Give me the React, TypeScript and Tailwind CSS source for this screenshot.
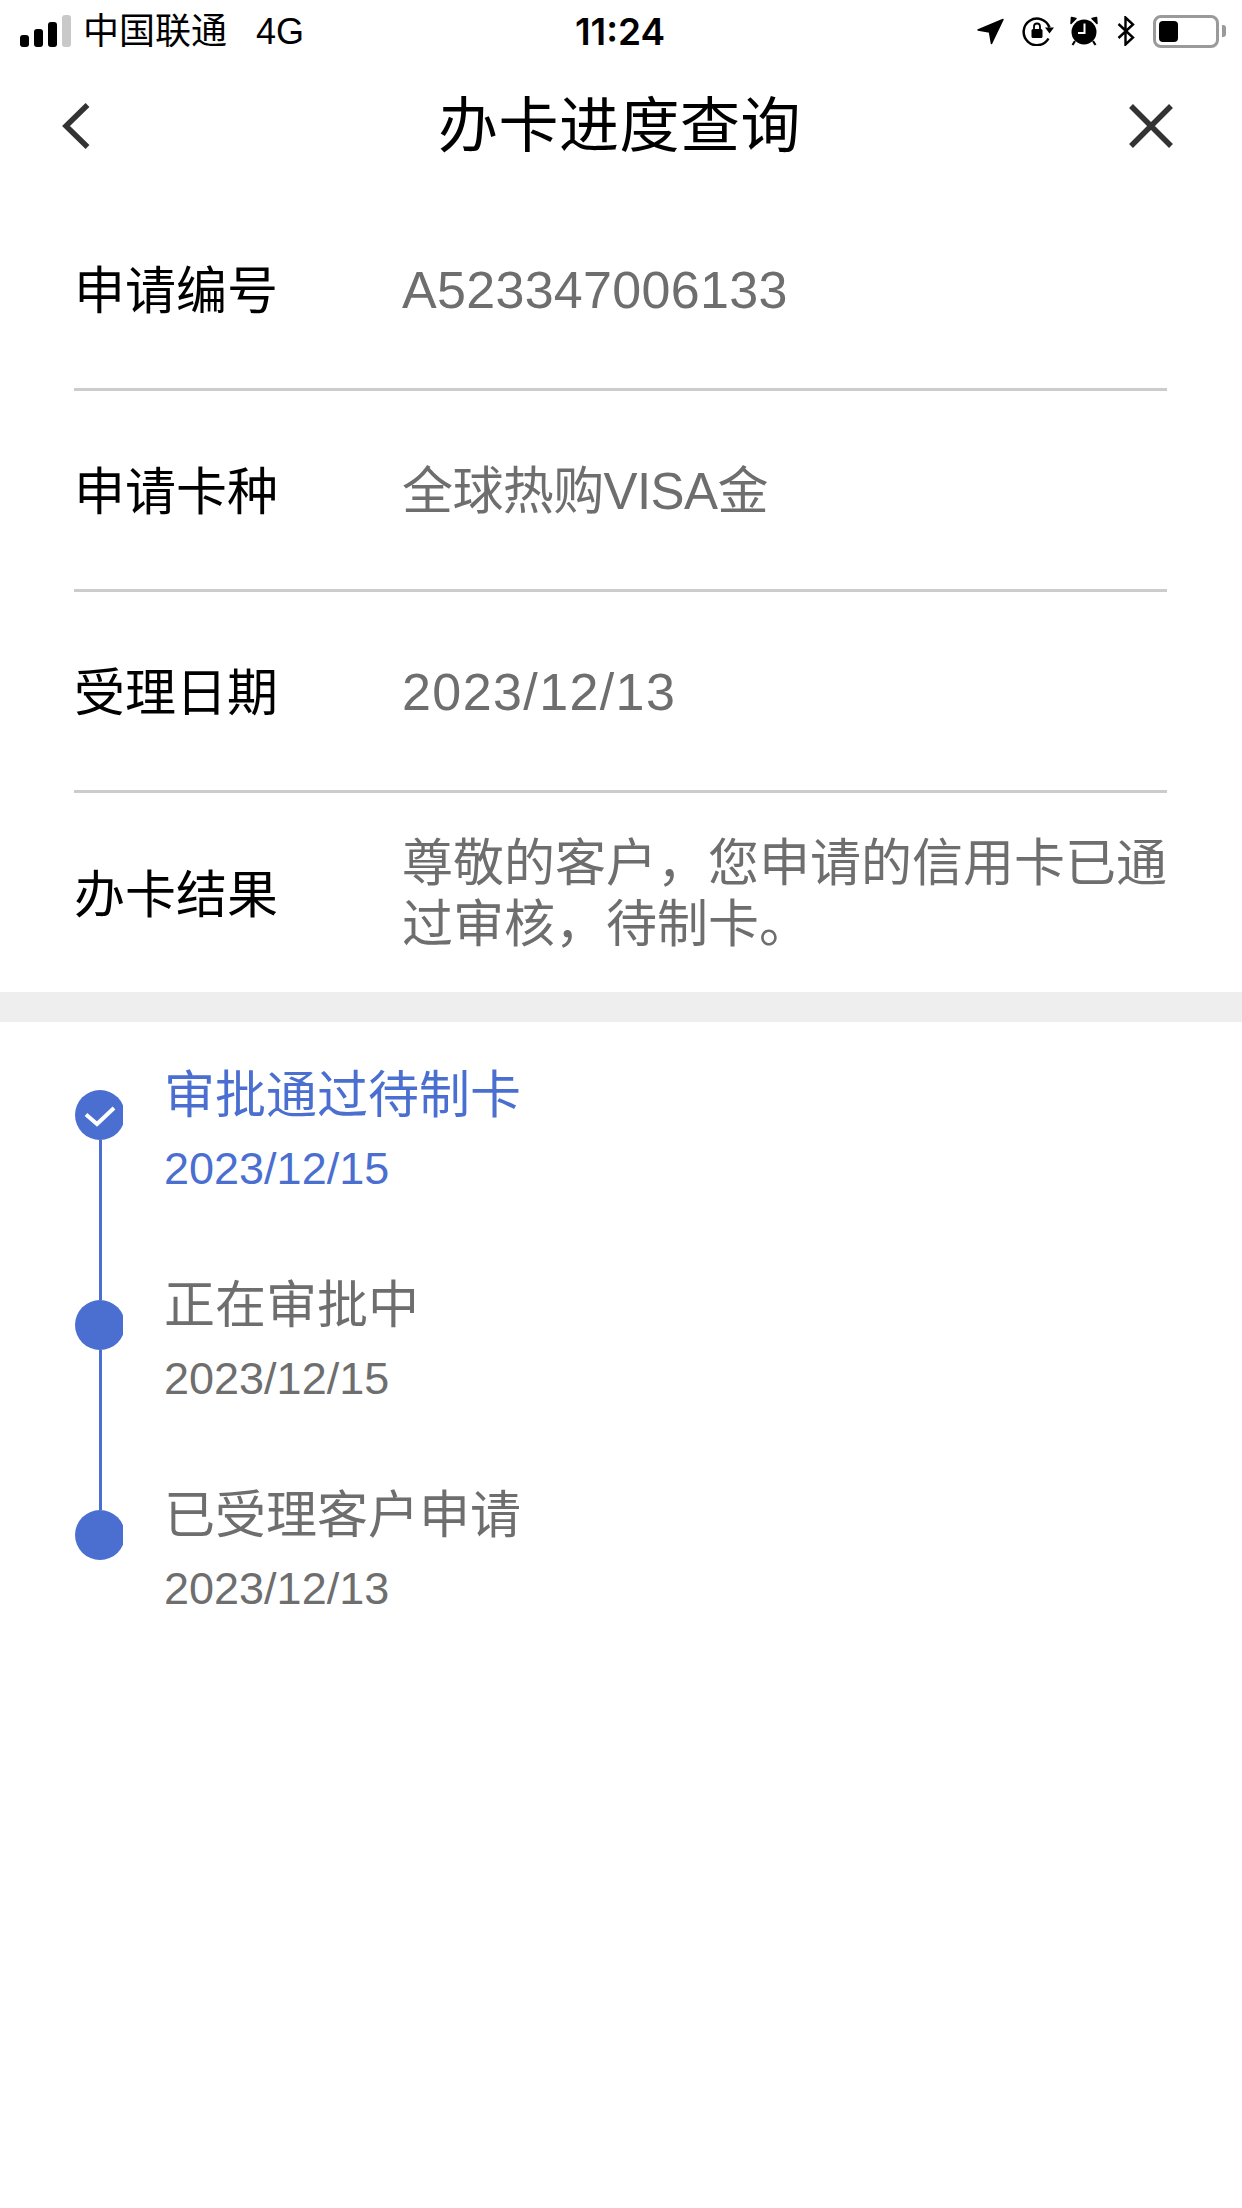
const FONT = '[font-family:"Liberation_Sans","Noto_Sans_CJK_SC",sans-serif]'

const rows = [
  { label: '申请编号', value: 'A523347006133', valueClass: 'text-[52px] tracking-[0.3px]' },
  { label: '申请卡种', value: '全球热购VISA金', valueClass: 'text-[51px] tracking-[-0.6px]' },
  { label: '受理日期', value: '2023/12/13', valueClass: 'text-[52px] tracking-[1.4px]' },
  { label: '办卡结果', value: '尊敬的客户，您申请的信用卡已通过审核，待制卡。', valueClass: 'text-[51px]' },
]

const steps = [
  { title: '审批通过待制卡', date: '2023/12/15', active: true },
  { title: '正在审批中', date: '2023/12/15', active: false },
  { title: '已受理客户申请', date: '2023/12/13', active: false },
]

function StatusIcons() {
  return (
    <div className="flex items-center justify-end">
      <svg width="27" height="27" viewBox="0 0 27 27" className="mr-[18px]">
        <path d="M1 12 26 1.5 14.5 25.5 12.5 14Z" fill="#000" stroke="#000" strokeWidth="1.5" strokeLinejoin="round" />
      </svg>
      <svg width="33" height="30" viewBox="0 0 33 30" className="mr-[15px]">
        <path d="M26.5 22.5A13.3 13.3 0 1 1 27.5 11.5" fill="none" stroke="#000" strokeWidth="2.5" />
        <path d="M23 11.5h9l-4.5 6z" fill="#000" />
        <rect x="9.5" y="13" width="11" height="9" rx="1.5" fill="#000" />
        <path d="M12 13v-2.5a3 3 0 0 1 6 0V13" fill="none" stroke="#000" strokeWidth="1.8" />
      </svg>
      <svg width="28" height="30" viewBox="0 0 28 30" className="mr-[19px]">
        <circle cx="14" cy="16" r="12.5" fill="#000" />
        <path d="M1 7.5 6 2.5 1.5 1.5ZM27 7.5 22 2.5 26.5 1.5Z" fill="#000" stroke="#000" strokeWidth="1.5" strokeLinejoin="round" />
        <path d="M5 25 2.5 29M23 25l2.5 4" stroke="#000" strokeWidth="2.2" />
        <path d="M14.5 7.5V17H8" fill="none" stroke="#fff" strokeWidth="2" />
      </svg>
      <svg width="18" height="30" viewBox="0 0 18 30" className="mr-[18px]">
        <path d="M1.5 8 16 21.5 8.5 28.5V1.5L16 8.5 1.5 22" fill="none" stroke="#000" strokeWidth="2.4" />
      </svg>
      <div className="flex items-center">
        <div className="w-[66px] h-[33px] rounded-[8px] border-[3px] border-[#9a9a9a] p-[3px]">
          <div className="w-[19px] h-full rounded-[4px] bg-black" />
        </div>
        <div className="w-[4px] h-[12px] ml-[3px] rounded-r-[3px] bg-[#9a9a9a]" />
      </div>
    </div>
  )
}

export default function App() {
  return (
    <div className={`min-h-[2208px] bg-white ${FONT}`}>
      {/* status bar */}
      <div className="h-[62px] grid grid-cols-[1fr_auto_1fr] items-center pl-[20px] pr-[16px]">
        <div className="flex items-center text-[36px] leading-none text-black">
          <div className="flex items-end gap-[5px] h-[32px]">
            <div className="w-[9px] h-[12px] rounded-[3px] bg-black" />
            <div className="w-[9px] h-[18px] rounded-[3px] bg-black" />
            <div className="w-[9px] h-[25px] rounded-[3px] bg-black" />
            <div className="w-[9px] h-[32px] rounded-[3px] bg-[#c9c9c9]" />
          </div>
          <span className="ml-[12px] pt-[2px]">中国联通</span>
          <span className="ml-[29px] pt-[2px]">4G</span>
        </div>
        <div className="mr-[6px] text-[37px] leading-none font-semibold text-black [font-family:Inter,sans-serif]">11:24</div>
        <StatusIcons />
      </div>

      {/* nav */}
      <div className="h-[128px] grid grid-cols-[1fr_auto_1fr] items-center pl-[62px] pr-[69px]">
        <svg width="28" height="46" viewBox="0 0 28 46">
          <path d="M25.5 2 4 23l21.5 21" fill="none" stroke="#333" strokeWidth="5.5" />
        </svg>
        <div className="ml-[4px] pt-[2px] text-[60px] tracking-[0.5px] leading-none text-black">办卡进度查询</div>
        <svg width="44" height="44" viewBox="0 0 44 44" className="justify-self-end">
          <path d="M2 2l40 40M42 2 2 42" fill="none" stroke="#333" strokeWidth="5.5" />
        </svg>
      </div>

      {/* info rows */}
      <div className="pl-[74px] pr-[75px]">
        {rows.map((row, i) => (
          <div
            key={row.label}
            className={`flex items-center pt-[2px] ${i < 3 ? 'h-[201px] border-b-[3px] border-[#cccccc]' : 'h-[199px]'}`}
          >
            <div className="w-[328px] shrink-0 pt-[3px] text-[51px] leading-none text-black">{row.label}</div>
            <div className={`flex-1 -mr-[4px] leading-[61px] text-[#6e6e6e] ${row.valueClass}`}>{row.value}</div>
          </div>
        ))}
      </div>

      <div className="h-[30px] bg-[#eeeeee]" />

      {/* timeline */}
      <div className="flex pl-[75px]">
        <div className="w-[48px] overflow-hidden pt-[68px] shrink-0">
          <div className="w-[50px] h-[50px] rounded-full bg-[#4a6fd0] flex items-center justify-center">
            <svg width="34" height="26" viewBox="0 0 34 26">
              <path d="M3 12.5l11 9.5L31 6" fill="none" stroke="#fff" strokeWidth="4" />
            </svg>
          </div>
          <div className="w-[3px] h-[160px] ml-[24px] bg-[#4a6fd0]" />
          <div className="w-[50px] h-[50px] rounded-full bg-[#4a6fd0]" />
          <div className="w-[3px] h-[160px] ml-[24px] bg-[#4a6fd0]" />
          <div className="w-[50px] h-[50px] rounded-full bg-[#4a6fd0]" />
        </div>
        <div className="pl-[41px] pt-[44px]">
          {steps.map(step => (
            <div key={step.title} className={`h-[210px] ${step.active ? 'text-[#4a6fd0]' : 'text-[#6e6e6e]'}`}>
              <div className="h-[60px] text-[51px] leading-[60px]">{step.title}</div>
              <div className="mt-[13px] text-[45px] leading-[60px]">{step.date}</div>
            </div>
          ))}
        </div>
      </div>
    </div>
  )
}
